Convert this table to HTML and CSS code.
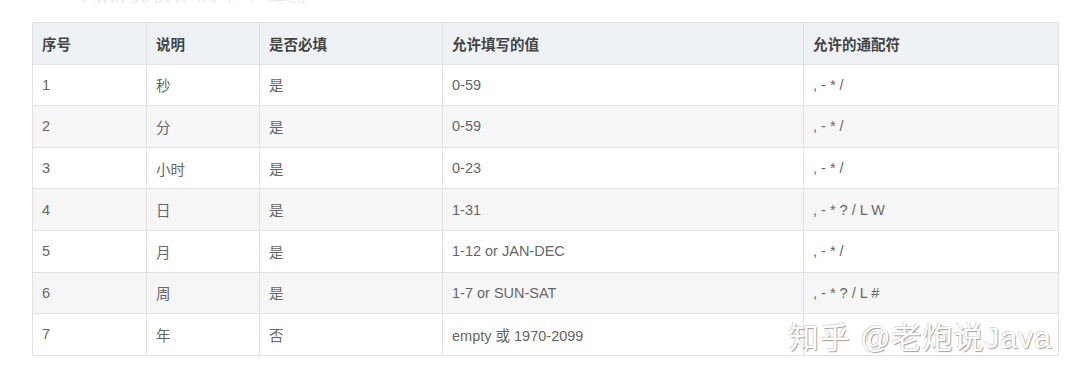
FILE: index.html
```html
<!DOCTYPE html>
<html lang="zh-CN">
<head>
  <meta charset="UTF-8" />
  <meta name="viewport" content="width=device-width, initial-scale=1.0"/>
  <title>Cron 表达式字段</title>
  <link rel="stylesheet" href="styles.css">
</head>
<body>

  <div class="cut-line"><span>Cron 表达式 的 七个 字段</span></div>

  <div class="wrap">
    <table class="cron-table">
      <colgroup>
        <col class="c1"><col class="c2"><col class="c3"><col class="c4"><col class="c5">
      </colgroup>
      <thead>
        <tr><th>序号</th><th>说明</th><th>是否必填</th><th>允许填写的值</th><th>允许的通配符</th></tr>
      </thead>
      <tbody>
        <tr><td>1</td><td>秒</td><td>是</td><td>0-59</td><td>, - * /</td></tr>
        <tr><td>2</td><td>分</td><td>是</td><td>0-59</td><td>, - * /</td></tr>
        <tr><td>3</td><td>小时</td><td>是</td><td>0-23</td><td>, - * /</td></tr>
        <tr><td>4</td><td>日</td><td>是</td><td>1-31</td><td>, - * ? / L W</td></tr>
        <tr><td>5</td><td>月</td><td>是</td><td>1-12 or JAN-DEC</td><td>, - * /</td></tr>
        <tr><td>6</td><td>周</td><td>是</td><td>1-7 or SUN-SAT</td><td>, - * ? / L #</td></tr>
        <tr><td>7</td><td>年</td><td>否</td><td>empty 或 1970-2099</td><td></td></tr>
      </tbody>
    </table>
    <div class="watermark">知乎 @老炮说Java</div>
  </div>

</body>
</html>
```

FILE: styles.css
```css
body {
  font-family: "Liberation Sans", "Noto Sans CJK SC", sans-serif;
  background-color: #fff;
  margin: 0;
  padding: 0;
}
.cut-line {
  height: 3px;
  overflow: hidden;
  padding-left: 82px;
  font-size: 20px;
  line-height: 10px;
  color: #ebebeb;
}
.cut-line span {
  display: block;
  margin-top: -6px;
}
.wrap {
  position: relative;
  margin: 19px 0 0 32px;
  width: 1026px;
}
.cron-table {
  width: 1026px;
  border-collapse: collapse;
  table-layout: fixed;
  font-size: 14.5px;
}
.c1 { width: 114px; }
.c2 { width: 113px; }
.c3 { width: 183px; }
.c4 { width: 361px; }
.c5 { width: 255px; }
.cron-table th,
.cron-table td {
  border: 1px solid #e2e2e2;
  height: 40.6px;
  padding: 0 9px;
  text-align: left;
  vertical-align: middle;
}
.cron-table th {
  background-color: #eff2f5;
  color: #444;
  font-weight: bold;
}
.cron-table td {
  color: #666;
}
.cron-table tbody tr:nth-child(even) td {
  background-color: #f6f6f6;
}
.watermark {
  position: absolute;
  right: 6px;
  bottom: -1px;
  font-size: 30px;
  color: #fff;
  letter-spacing: 1px;
  text-shadow: 1px 1px 1px #a0a0a0, -1px -1px 0 #dcdcdc;
}
```
